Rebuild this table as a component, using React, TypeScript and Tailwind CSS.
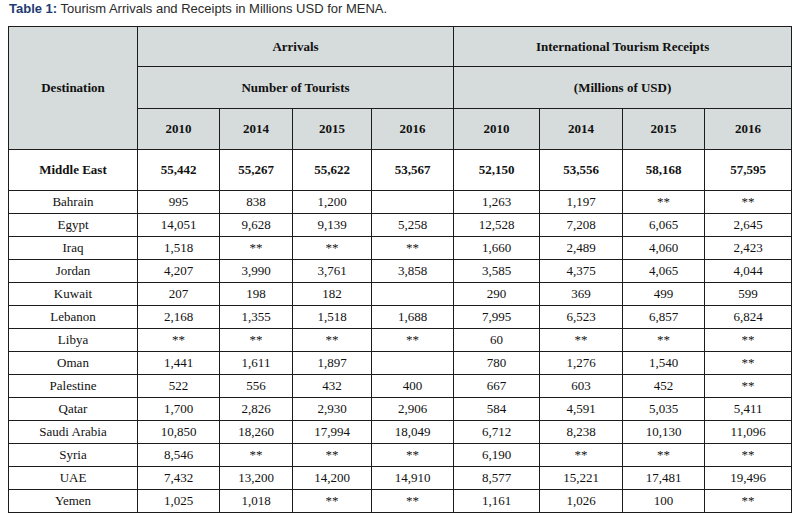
import React from "react";

const years = ["2010", "2014", "2015", "2016"];

const rows: string[][] = [
  ["Bahrain", "995", "838", "1,200", "", "1,263", "1,197", "**", "**"],
  ["Egypt", "14,051", "9,628", "9,139", "5,258", "12,528", "7,208", "6,065", "2,645"],
  ["Iraq", "1,518", "**", "**", "**", "1,660", "2,489", "4,060", "2,423"],
  ["Jordan", "4,207", "3,990", "3,761", "3,858", "3,585", "4,375", "4,065", "4,044"],
  ["Kuwait", "207", "198", "182", "", "290", "369", "499", "599"],
  ["Lebanon", "2,168", "1,355", "1,518", "1,688", "7,995", "6,523", "6,857", "6,824"],
  ["Libya", "**", "**", "**", "**", "60", "**", "**", "**"],
  ["Oman", "1,441", "1,611", "1,897", "", "780", "1,276", "1,540", "**"],
  ["Palestine", "522", "556", "432", "400", "667", "603", "452", "**"],
  ["Qatar", "1,700", "2,826", "2,930", "2,906", "584", "4,591", "5,035", "5,411"],
  ["Saudi Arabia", "10,850", "18,260", "17,994", "18,049", "6,712", "8,238", "10,130", "11,096"],
  ["Syria", "8,546", "**", "**", "**", "6,190", "**", "**", "**"],
  ["UAE", "7,432", "13,200", "14,200", "14,910", "8,577", "15,221", "17,481", "19,496"],
  ["Yemen", "1,025", "1,018", "**", "**", "1,161", "1,026", "100", "**"],
];

const widths = [129, 82, 73, 79, 82, 86, 83, 82, 87];

const cell = "border border-[#1c1c1c] text-center align-middle p-0";

export default function App() {
  return (
    <div className="w-[796px] h-[518px] bg-white overflow-hidden">
      <div
        className="pl-[9px] pt-[1px] text-[13px] leading-[15px] text-[#2a2a2a]"
        style={{ fontFamily: '"Liberation Sans", Arial, sans-serif' }}
      >
        <span className="font-bold text-[#1e3b73]">Table 1:</span> Tourism Arrivals and Receipts in Millions USD for MENA.
      </div>
      <table
        className="ml-[8px] mt-[10px] border-collapse table-fixed text-[13px] text-[#111]"
        style={{ fontFamily: '"Liberation Serif", "Times New Roman", serif', width: 783 }}
      >
        <colgroup>
          {widths.map((w, i) => (
            <col key={i} style={{ width: w }} />
          ))}
        </colgroup>
        <thead>
          <tr className="h-[40px] bg-[#d6dcdb] font-bold">
            <th rowSpan={3} className={cell}>Destination</th>
            <th colSpan={4} className={cell}>Arrivals</th>
            <th colSpan={4} className={cell}>International Tourism Receipts</th>
          </tr>
          <tr className="h-[42px] bg-[#d6dcdb] font-bold">
            <th colSpan={4} className={cell}>Number of Tourists</th>
            <th colSpan={4} className={cell}>(Millions of USD)</th>
          </tr>
          <tr className="h-[41px] bg-[#d6dcdb] font-bold">
            {years.map((y) => (
              <th key={"a" + y} className={cell}>{y}</th>
            ))}
            {years.map((y) => (
              <th key={"r" + y} className={cell}>{y}</th>
            ))}
          </tr>
        </thead>
        <tbody>
          <tr className="h-[41px] font-bold">
            {["Middle East", "55,442", "55,267", "55,622", "53,567", "52,150", "53,556", "58,168", "57,595"].map((v, i) => (
              <td key={i} className={cell}>{v}</td>
            ))}
          </tr>
          {rows.map((r) => (
            <tr key={r[0]} className="h-[23px]">
              {r.map((v, i) => (
                <td key={i} className={cell}>{v}</td>
              ))}
            </tr>
          ))}
        </tbody>
      </table>
    </div>
  );
}
